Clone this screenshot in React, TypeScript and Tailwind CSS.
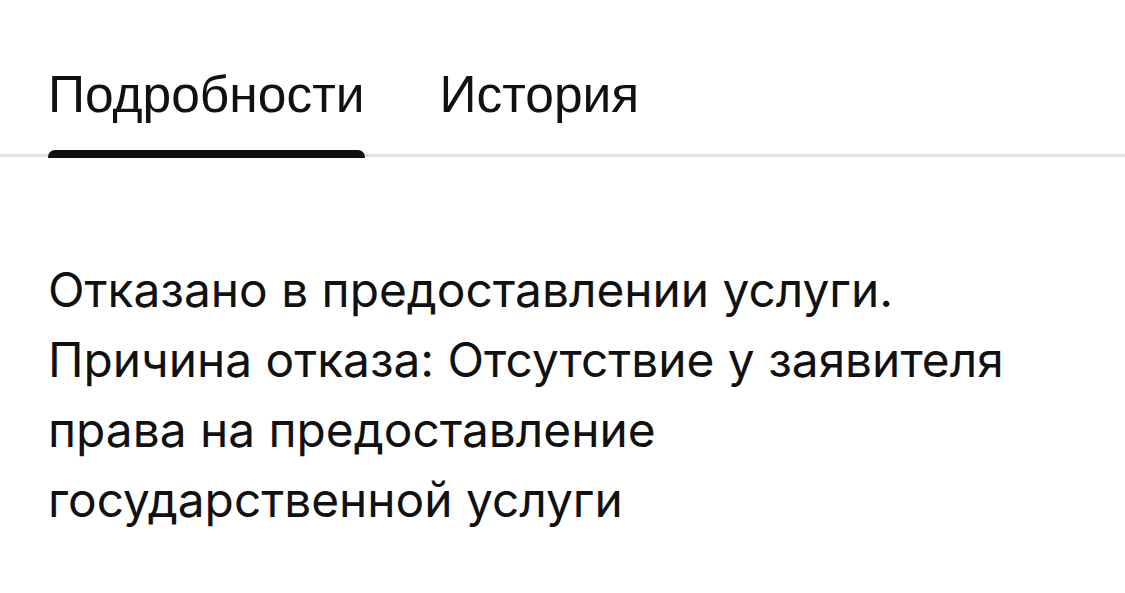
export default function App() {
  return (
    <div className="min-h-[593px] w-full bg-white">
      <div className="relative pt-[64px]">
        <div className="flex gap-[75px] px-[48px]">
          <div className="relative">
            <span className="block font-['Liberation_Sans',Arial,sans-serif] text-[51.5px] leading-[60px] text-[#111]">
              Подробности
            </span>
            <div className="relative z-10 mt-[26px] h-[8px] rounded-t-[7px] bg-[#111]" />
          </div>
          <div>
            <span className="block font-['Liberation_Sans',Arial,sans-serif] text-[51.5px] leading-[60px] text-[#111]">
              История
            </span>
          </div>
        </div>
        <div className="absolute bottom-[1px] left-0 right-0 h-[3px] bg-[#e2e2e6]" />
      </div>
      <div className="px-[48px] pt-[97px]">
        <p className="max-w-[990px] font-['Inter',sans-serif] text-[47.8px] leading-[70px] text-[#111]">
          Отказано в предоставлении услуги.
          <br />
          Причина отказа: Отсутствие у заявителя права на предоставление государственной услуги
        </p>
      </div>
    </div>
  );
}
